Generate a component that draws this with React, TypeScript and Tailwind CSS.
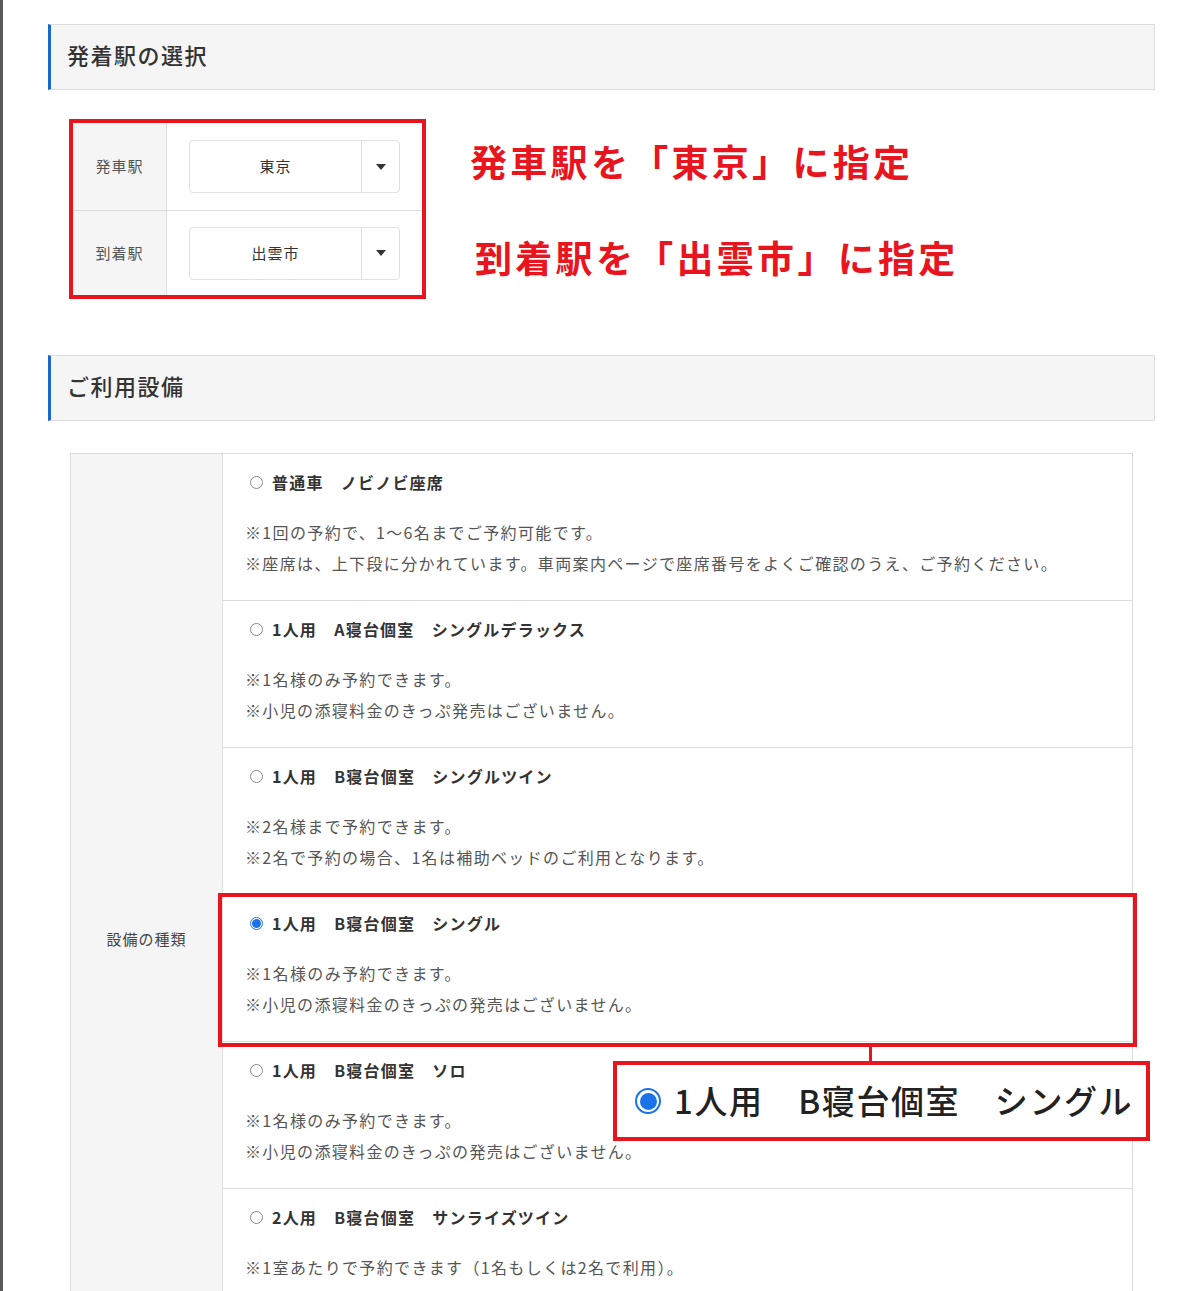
const FONT = { fontFamily: '"Noto Sans CJK JP", "Noto Sans", sans-serif' };

interface Option {
  title: string;
  notes: string[];
  checked?: boolean;
}

const options: Option[] = [
  {
    title: '普通車　ノビノビ座席',
    notes: [
      '※1回の予約で、1～6名までご予約可能です。',
      '※座席は、上下段に分かれています。車両案内ページで座席番号をよくご確認のうえ、ご予約ください。',
    ],
  },
  {
    title: '1人用　A寝台個室　シングルデラックス',
    notes: ['※1名様のみ予約できます。', '※小児の添寝料金のきっぷ発売はございません。'],
  },
  {
    title: '1人用　B寝台個室　シングルツイン',
    notes: ['※2名様まで予約できます。', '※2名で予約の場合、1名は補助ベッドのご利用となります。'],
  },
  {
    title: '1人用　B寝台個室　シングル',
    notes: ['※1名様のみ予約できます。', '※小児の添寝料金のきっぷの発売はございません。'],
    checked: true,
  },
  {
    title: '1人用　B寝台個室　ソロ',
    notes: ['※1名様のみ予約できます。', '※小児の添寝料金のきっぷの発売はございません。'],
  },
  {
    title: '2人用　B寝台個室　サンライズツイン',
    notes: ['※1室あたりで予約できます（1名もしくは2名で利用）。'],
  },
];

function SectionHeader({ children }: { children: React.ReactNode }) {
  return (
    <div className="ml-[45px] mr-[45px] h-[66px] flex items-center pl-[16px] pb-[5px] bg-[#f5f5f5] border border-[#dcdcdc] border-l-[3px] border-l-[#1b67c9]">
      <h2 className="text-[22px] tracking-[1.5px] font-medium text-[#333]">{children}</h2>
    </div>
  );
}

function Select({ value }: { value: string }) {
  return (
    <div className="w-[211px] h-[53px] flex bg-white border border-[#e0e0e0] rounded-[4px]">
      <div className="flex-1 flex items-center justify-center text-[15px] tracking-[1px] text-[#333]">{value}</div>
      <div className="w-[38px] flex items-center justify-center border-l border-[#e0e0e0]">
        <span className="w-0 h-0 border-l-[5px] border-r-[5px] border-t-[6px] border-l-transparent border-r-transparent border-t-[#333]" />
      </div>
    </div>
  );
}

function Radio({ checked }: { checked?: boolean }) {
  if (checked) {
    return (
      <span className="w-[13px] h-[13px] rounded-full border border-[#1a73e8] bg-white flex items-center justify-center">
        <span className="w-[9px] h-[9px] rounded-full bg-[#1a73e8]" />
      </span>
    );
  }
  return <span className="w-[13px] h-[13px] rounded-full border border-[#8a8a8a] bg-white" />;
}

export default function App() {
  return (
    <div className="min-h-screen bg-white border-l-[3px] border-[#5a5a5a] pt-[24px] pb-[40px]" style={FONT}>
      {/* 発着駅の選択 */}
      <SectionHeader>発着駅の選択</SectionHeader>

      <div className="flex mt-[29px] ml-[66px]">
        <div className="w-[357px] border-4 border-[#e8141e]">
          <div className="flex h-[88px] border-b border-[#dcdcdc]">
            <div className="w-[94px] bg-[#f5f5f5] border-r border-[#dcdcdc] flex items-center justify-center text-[15px] tracking-[1px] text-[#555]">発車駅</div>
            <div className="flex-1 flex items-center pl-[22px]">
              <Select value="東京" />
            </div>
          </div>
          <div className="flex h-[84px]">
            <div className="w-[94px] bg-[#f5f5f5] border-r border-[#dcdcdc] flex items-center justify-center text-[15px] tracking-[1px] text-[#555]">到着駅</div>
            <div className="flex-1 flex items-center pl-[22px]">
              <Select value="出雲市" />
            </div>
          </div>
        </div>

        <div className="ml-[44px] pt-[17px] flex flex-col gap-[46px] text-[#e8141e] font-bold text-[37px] tracking-[3.3px] leading-[50px]">
          <p>発車駅を「東京」に指定</p>
          <p className="ml-[5px]">到着駅を「出雲市」に指定</p>
        </div>
      </div>

      {/* ご利用設備 */}
      <div className="mt-[56px]">
        <SectionHeader>ご利用設備</SectionHeader>
      </div>

      <div className="flex mt-[32px] ml-[67px] w-[1063px] border border-[#dcdcdc]">
        <div className="w-[152px] shrink-0 bg-[#f5f5f5] border-r border-[#dcdcdc] flex items-start justify-center pt-[474px]">
          <span className="text-[15px] tracking-[1px] text-[#444]">設備の種類</span>
        </div>
        <div className="flex-1">
          {options.map((opt, i) => (
            <div
              key={i}
              className={`relative pt-[16px] px-[22px] border-b border-[#dcdcdc] ${i === options.length - 1 ? 'min-h-[239px]' : 'h-[147px]'}`}
            >
              <div className="flex items-center gap-[9px] ml-[5px] h-[24px]">
                <Radio checked={opt.checked} />
                <span className="text-[16px] font-bold tracking-[1.2px] text-[#333]">{opt.title}</span>
              </div>
              <div className="mt-[23px] text-[16px] leading-[31px] tracking-[1.35px] text-[#555]">
                {opt.notes.map((n) => (
                  <p key={n}>{n}</p>
                ))}
              </div>

              {opt.checked && (
                <>
                  <div className="absolute -left-[5px] -right-[5px] -top-[2px] -bottom-[6px] border-4 border-[#e8141e] pointer-events-none" />
                  <div className="absolute left-[646px] top-[151px] w-[3px] h-[16px] bg-[#e8141e]" />
                  <div className="absolute z-10 left-[390px] top-[166px] w-[537px] h-[80px] bg-white border-4 border-[#e8141e] flex items-center pl-[18px] gap-[13px]">
                    <span className="w-[26px] h-[26px] rounded-full border-2 border-[#1a73e8] bg-white flex items-center justify-center">
                      <span className="w-[17px] h-[17px] rounded-full bg-[#1a73e8]" />
                    </span>
                    <span className="text-[33px] tracking-[1.6px] text-[#222] font-medium">1人用　B寝台個室　シングル</span>
                  </div>
                </>
              )}
            </div>
          ))}
        </div>
      </div>
    </div>
  );
}
